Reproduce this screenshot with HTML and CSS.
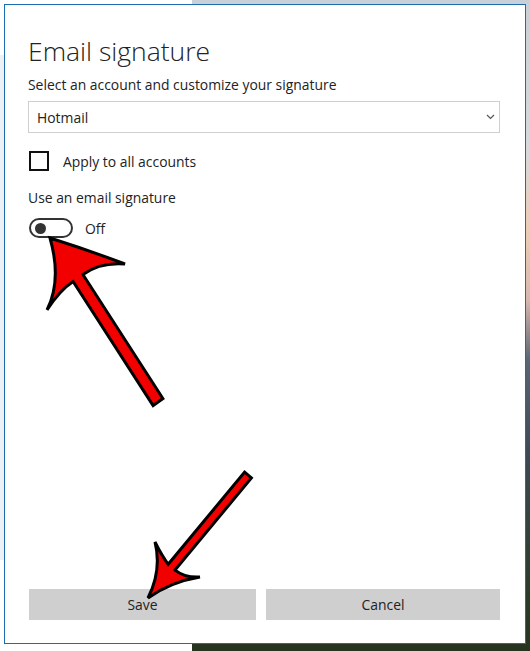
FILE: index.html
```html
<!DOCTYPE html>
<html lang="en">
<head>
<meta charset="utf-8">
<title>Email signature</title>
<link rel="stylesheet" href="styles.css">
</head>
<body>
<div class="desk">
  <div class="dialog">
    <h1 class="title">Email signature</h1>
    <p class="label">Select an account and customize your signature</p>
    <div class="select">
      <span>Hotmail</span>
      <svg class="chev" width="9" height="6" viewBox="0 0 9 6"><path d="M1 1 L4.5 4.5 L8 1" fill="none" stroke="#555" stroke-width="1.2"/></svg>
    </div>
    <label class="check-row">
      <span class="box"></span>
      <span>Apply to all accounts</span>
    </label>
    <p class="label sig">Use an email signature</p>
    <div class="toggle-row">
      <span class="toggle"><span class="knob"></span></span>
      <span>Off</span>
    </div>
    <div class="spacer"></div>
    <div class="buttons">
      <button class="btn">Save</button>
      <button class="btn">Cancel</button>
    </div>
  </div>
</div>
<svg class="arrows" width="530" height="651" viewBox="0 0 530 651">
  <path d="M50 238 Q62 280 47 310 Q60 290 73.1 281.5 L153.1 405.5 L162.9 398.5 L82.9 274.5 Q100 262 125 264 Q88 250 50 238 Z" fill="#f20000" stroke="#000" stroke-width="3" stroke-linejoin="miter"/>
  <path d="M148 598 Q162 570 155 542 Q162 556 168.2 564.3 L244.6 472.1 L251.4 477.9 L175 570.1 Q185 578 200 577 Q170 582 148 598 Z" fill="#f20000" stroke="#000" stroke-width="3" stroke-linejoin="miter"/>
</svg>
</body>
</html>
```
FILE: styles.css
```css
html, body {
  margin: 0;
  padding: 0;
}
body {
  width: 530px;
  height: 651px;
  overflow: hidden;
  position: relative;
  font-family: "Open Sans", "Noto Sans", "Liberation Sans", sans-serif;
  color: #222;
  background:
    linear-gradient(to bottom, #c9d0d7 0, #d6d9dc 150px, #eccdb4 230px, #d7b8ae 300px, #5b6675 360px, #3e4a55 450px, #2c3a28 600px, #25331f 651px) right top / 338px 651px no-repeat,
    linear-gradient(to bottom, #ffffff 0, #ffffff 55px, #eef1f4 55px, #eef1f4 560px, #ffffff 560px) left top / 4px 651px no-repeat,
    #ffffff;
}
.desk {
  padding: 4px 4px 7px 4px;
  height: 651px;
  box-sizing: border-box;
  display: flex;
}
.dialog {
  flex: 1;
  background: #fff;
  border: 1.5px solid #1c6db0;
  display: flex;
  flex-direction: column;
  padding: 30px 25px 23px 23px;
}
.title {
  margin: 0;
  font-size: 26.5px;
  line-height: 33px;
  font-weight: 300;
  color: #222;
}
.label {
  margin: 7px 0 0;
  font-size: 13.9px;
  line-height: 20px;
}
.select {
  margin-top: 6px;
  height: 32px;
  box-sizing: border-box;
  border: 1.5px solid #cfcfcf;
  display: flex;
  align-items: center;
  justify-content: space-between;
  padding: 0 4px 0 8px;
  font-size: 13.9px;
}
.check-row {
  margin-top: 18px;
  display: flex;
  align-items: center;
  gap: 14px;
  padding-left: 1px;
  font-size: 13.9px;
}
.box {
  width: 20px;
  height: 20px;
  box-sizing: border-box;
  border: 2px solid #111;
}
.label.sig {
  margin-top: 17px;
}
.toggle-row {
  margin-top: 10px;
  display: flex;
  align-items: center;
  gap: 12px;
  padding-left: 1px;
  font-size: 13.9px;
}
.toggle {
  width: 44px;
  height: 20px;
  box-sizing: border-box;
  border: 2px solid #333;
  border-radius: 10px;
  display: flex;
  align-items: center;
  padding-left: 4px;
}
.knob {
  width: 11px;
  height: 11px;
  border-radius: 50%;
  background: #333;
}
.spacer {
  flex: 1;
}
.buttons {
  display: grid;
  grid-template-columns: 227px 1fr;
  gap: 10px;
  padding-left: 1px;
}
.btn {
  height: 31px;
  border: 0;
  background: #cfcfcf;
  font-family: inherit;
  font-size: 13.9px;
  color: #222;
  padding: 0;
}
.arrows {
  position: absolute;
  left: 0;
  top: 0;
  pointer-events: none;
}
```
